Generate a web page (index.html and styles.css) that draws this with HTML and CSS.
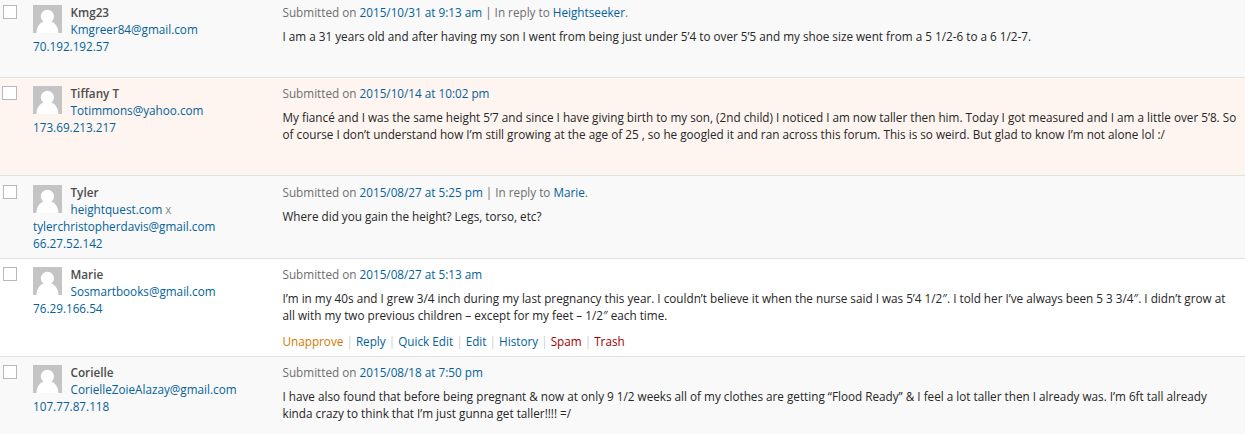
FILE: index.html
```html
<!DOCTYPE html>
<html lang="en">
<head>
  <meta charset="UTF-8">
  <meta name="viewport" content="width=device-width, initial-scale=1.0">
  <title>Comments</title>
  <link rel="stylesheet" href="styles.css">
</head>
<body>
  <svg class="sprite" width="0" height="0">
    <symbol id="avatar" viewBox="0 0 29 28">
      <rect width="29" height="28" fill="#c4c4c4"/>
      <circle cx="14.4" cy="11.3" r="6.6" fill="#fff"/>
      <path d="M3.4 28C3.6 22 6.6 17.6 11 16.2H17.8C22.2 17.6 25.2 22 25.4 28Z" fill="#fff"/>
    </symbol>
  </svg>
  <div class="comments">
    <div class="comment first alt">
      <div class="check"><input type="checkbox"></div>
      <div class="author">
        <svg class="avatar"><use href="#avatar"/></svg>
        <strong>Kmg23</strong><br>
        <a href="#">Kmgreer84@gmail.com</a><br>
        <a href="#">70.192.192.57</a>
      </div>
      <div class="content">
        <div class="submitted">Submitted on <a href="#">2015/10/31 at 9:13 am</a> | In reply to <a href="#">Heightseeker</a>.</div>
        <p>I am a 31 years old and after having my son I went from being just under 5’4 to over 5’5 and my shoe size went from a 5 1/2-6 to a 6 1/2-7.</p>
      </div>
    </div>
    <div class="comment unapproved">
      <div class="check"><input type="checkbox"></div>
      <div class="author">
        <svg class="avatar"><use href="#avatar"/></svg>
        <strong>Tiffany T</strong><br>
        <a href="#">Totimmons@yahoo.com</a><br>
        <a href="#">173.69.213.217</a>
      </div>
      <div class="content">
        <div class="submitted">Submitted on <a href="#">2015/10/14 at 10:02 pm</a></div>
        <p>My fiancé and I was the same height 5’7 and since I have giving birth to my son, (2nd child) I noticed I am now taller then him. Today I got measured and I am a little over 5’8. So<br>of course I don’t understand how I’m still growing at the age of 25 , so he googled it and ran across this forum. This is so weird. But glad to know I’m not alone lol :/</p>
      </div>
    </div>
    <div class="comment short alt">
      <div class="check"><input type="checkbox"></div>
      <div class="author">
        <svg class="avatar"><use href="#avatar"/></svg>
        <strong>Tyler</strong><br>
        <a href="#">heightquest.com</a> <span class="remove">x</span><br>
        <a href="#">tylerchristopherdavis@gmail.com</a><br>
        <a href="#">66.27.52.142</a>
      </div>
      <div class="content">
        <div class="submitted">Submitted on <a href="#">2015/08/27 at 5:25 pm</a> | In reply to <a href="#">Marie</a>.</div>
        <p>Where did you gain the height? Legs, torso, etc?</p>
      </div>
    </div>
    <div class="comment">
      <div class="check"><input type="checkbox"></div>
      <div class="author">
        <svg class="avatar"><use href="#avatar"/></svg>
        <strong>Marie</strong><br>
        <a href="#">Sosmartbooks@gmail.com</a><br>
        <a href="#">76.29.166.54</a>
      </div>
      <div class="content">
        <div class="submitted">Submitted on <a href="#">2015/08/27 at 5:13 am</a></div>
        <p>I’m in my 40s and I grew 3/4 inch during my last pregnancy this year. I couldn’t believe it when the nurse said I was 5’4 1/2″. I told her I’ve always been 5 3 3/4″. I didn’t grow at<br>all with my two previous children – except for my feet – 1/2″ each time.</p>
        <div class="actions">
          <a class="unapprove" href="#">Unapprove</a> | <a href="#">Reply</a> | <a href="#">Quick Edit</a> | <a href="#">Edit</a> | <a href="#">History</a> | <a class="delete" href="#">Spam</a> | <a class="delete" href="#">Trash</a>
        </div>
      </div>
    </div>
    <div class="comment alt">
      <div class="check"><input type="checkbox"></div>
      <div class="author">
        <svg class="avatar"><use href="#avatar"/></svg>
        <strong>Corielle</strong><br>
        <a href="#">CorielleZoieAlazay@gmail.com</a><br>
        <a href="#">107.77.87.118</a>
      </div>
      <div class="content">
        <div class="submitted">Submitted on <a href="#">2015/08/18 at 7:50 pm</a></div>
        <p>I have also found that before being pregnant &amp; now at only 9 1/2 weeks all of my clothes are getting “Flood Ready” &amp; I feel a lot taller then I already was. I’m 6ft tall already<br>kinda crazy to think that I’m just gunna get taller!!!! =/</p>
      </div>
    </div>
  </div>
</body>
</html>
```
FILE: styles.css
```css
body {
  margin: 0;
  font-family: "Open Sans", sans-serif;
  font-size: 11.72px;
  line-height: 17px;
  color: #4c4c4c;
  background-color: #f9f9f9;
}
a {
  color: #04629a;
  text-decoration: none;
}
.sprite {
  display: block;
}
.comments {
  height: 434px;
  overflow: hidden;
}
.comment {
  display: grid;
  grid-template-columns: 33px 249.5px 1fr;
  box-sizing: border-box;
  height: 98px;
  padding-top: 7px;
  border-bottom: 1px solid #e1e1e1;
  background-color: #fff;
  white-space: nowrap;
}
.comment.first {
  height: 78px;
  padding-top: 4px;
}
.comment.short {
  height: 83px;
  padding-top: 8px;
}
.comment.alt {
  background-color: #f9f9f9;
}
.comment.unapproved {
  background-color: #fef5f0;
}
.check {
  padding: 1px 0 0 3px;
}
.check input {
  appearance: none;
  display: block;
  box-sizing: border-box;
  width: 14px;
  height: 14px;
  margin: 0;
  border: 1px solid #b4b9be;
  background-color: #fff;
}
.unapproved .check {
  padding-left: 2px;
}
.unapproved .check input {
  width: 15px;
}
.avatar {
  float: left;
  width: 29px;
  height: 28px;
  margin: 1px 8.5px 0 0;
}
.author strong {
  font-weight: 600;
}
.remove {
  color: #8c8c8c;
}
.submitted {
  color: #6e6e6e;
}
.content p {
  margin: 7px 0 0;
  color: #262626;
}
.actions {
  margin-top: 9px;
  color: #ccc;
}
.actions .unapprove {
  color: #d27a00;
}
.actions .delete {
  color: #a00000;
}
```
